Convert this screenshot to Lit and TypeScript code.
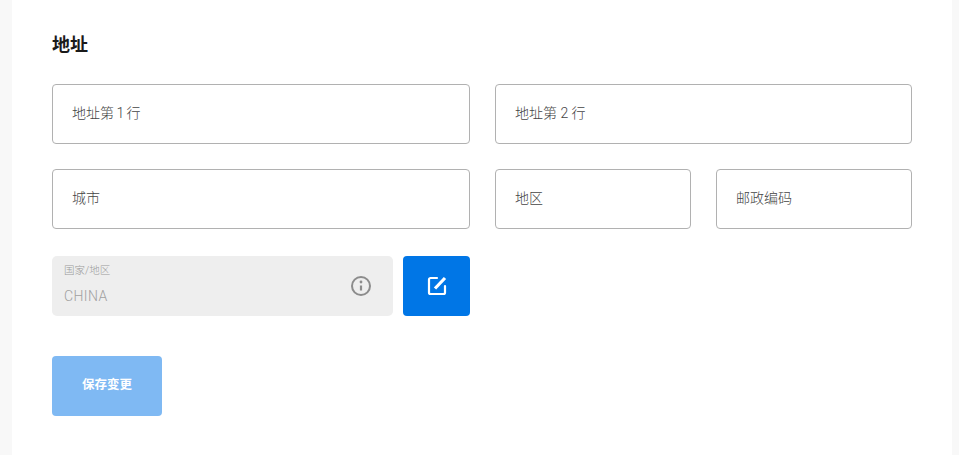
import { LitElement, html, css } from "lit";
import { customElement } from "lit/decorators.js";

@customElement("app-root")
export class AppRoot extends LitElement {
  static styles = css`
    :host {
      display: block;
      height: 455px;
      overflow: hidden;
      background: #f8f8f8;
      padding: 0 7px 0 12px;
      box-sizing: border-box;
      font-family: Roboto, "Noto Sans CJK SC", sans-serif;
    }
    .card {
      background: #fff;
      height: 455px;
      padding: 33px 40px 0 40px;
      box-sizing: border-box;
    }
    h2 {
      margin: 0 0 28px;
      font-size: 18px;
      line-height: 23px;
      font-weight: 700;
      color: #1a1a1a;
    }
    .grid {
      display: grid;
      grid-template-columns: 418px 417px;
      column-gap: 25px;
      row-gap: 25px;
      width: 860px;
    }
    .field {
      height: 60px;
      box-sizing: border-box;
      border: 1px solid #b1b1b1;
      border-radius: 4px;
      padding: 0 19px 4px;
      display: flex;
      align-items: center;
      font-size: 14px;
      font-weight: 300;
      color: #444;
      background: #fff;
      white-space: pre;
    }
    .narrow {
      margin: 0 -1px;
    }
    .pair {
      display: grid;
      grid-template-columns: 196px 196px;
      column-gap: 25px;
    }
    .country {
      display: flex;
      gap: 10px;
      margin-top: 27px;
      width: 418px;
    }
    .disabled {
      width: 341px;
      height: 60px;
      box-sizing: border-box;
      background: #eee;
      border-radius: 5px;
      padding: 8px 21px 0 12px;
      display: flex;
      justify-content: space-between;
      align-items: center;
    }
    .stack {
      display: flex;
      flex-direction: column;
      align-self: flex-start;
    }
    .label {
      font-size: 10.5px;
      line-height: 13px;
      font-weight: 300;
      color: #999;
    }
    .value {
      font-size: 14px;
      line-height: 18px;
      margin-top: 10px;
      letter-spacing: 0.4px;
      color: #a0a0a0;
      font-weight: 300;
    }
    .info {
      width: 22px;
      height: 22px;
      display: block;
      margin-top: -8px;
    }
    .edit {
      width: 67px;
      height: 60px;
      background: #0076e6;
      border-radius: 4px;
      border: none;
      padding: 0;
      display: flex;
      align-items: center;
      justify-content: center;
    }
    .edit svg {
      width: 24px;
      height: 24px;
      display: block;
    }
    .save {
      display: flex;
      align-items: center;
      justify-content: center;
      margin-top: 40px;
      width: 110px;
      height: 60px;
      background: #7fb9f3;
      color: #fff;
      border: none;
      border-radius: 4px;
      font-family: inherit;
      font-size: 12.5px;
      font-weight: 700;
      padding: 0 0 5px;
    }
  `;

  render() {
    return html`
      <div class="card">
        <h2>地址</h2>
        <div class="grid">
          <div class="field"><span>地址第 <span class="narrow">1</span> 行</span></div>
          <div class="field">地址第 2 行</div>
          <div class="field">城市</div>
          <div class="pair">
            <div class="field">地区</div>
            <div class="field">邮政编码</div>
          </div>
        </div>
        <div class="country">
          <div class="disabled">
            <div class="stack">
              <span class="label">国家/地区</span>
              <span class="value">CHINA</span>
            </div>
            <svg class="info" viewBox="0 0 22 22" fill="none" stroke="#8c8c8c" stroke-width="2">
              <circle cx="11" cy="11" r="9"></circle>
              <path d="M11 10.5v5" stroke-width="2.2"></path>
              <circle cx="11" cy="7" r="1.4" fill="#8c8c8c" stroke="none"></circle>
            </svg>
          </div>
          <button class="edit" aria-label="edit">
            <svg viewBox="0 0 24 24" fill="none" stroke="#fff" stroke-width="2.2" stroke-linecap="round" stroke-linejoin="round">
              <path d="M12 4H5.5A1.5 1.5 0 0 0 4 5.5v13A1.5 1.5 0 0 0 5.5 20h13a1.5 1.5 0 0 0 1.5-1.5V12"></path>
              <path d="M10 14.5l10-10.5" stroke-width="3.2" stroke-linecap="butt"></path>
            </svg>
          </button>
        </div>
        <button class="save">保存变更</button>
      </div>
    `;
  }
}
